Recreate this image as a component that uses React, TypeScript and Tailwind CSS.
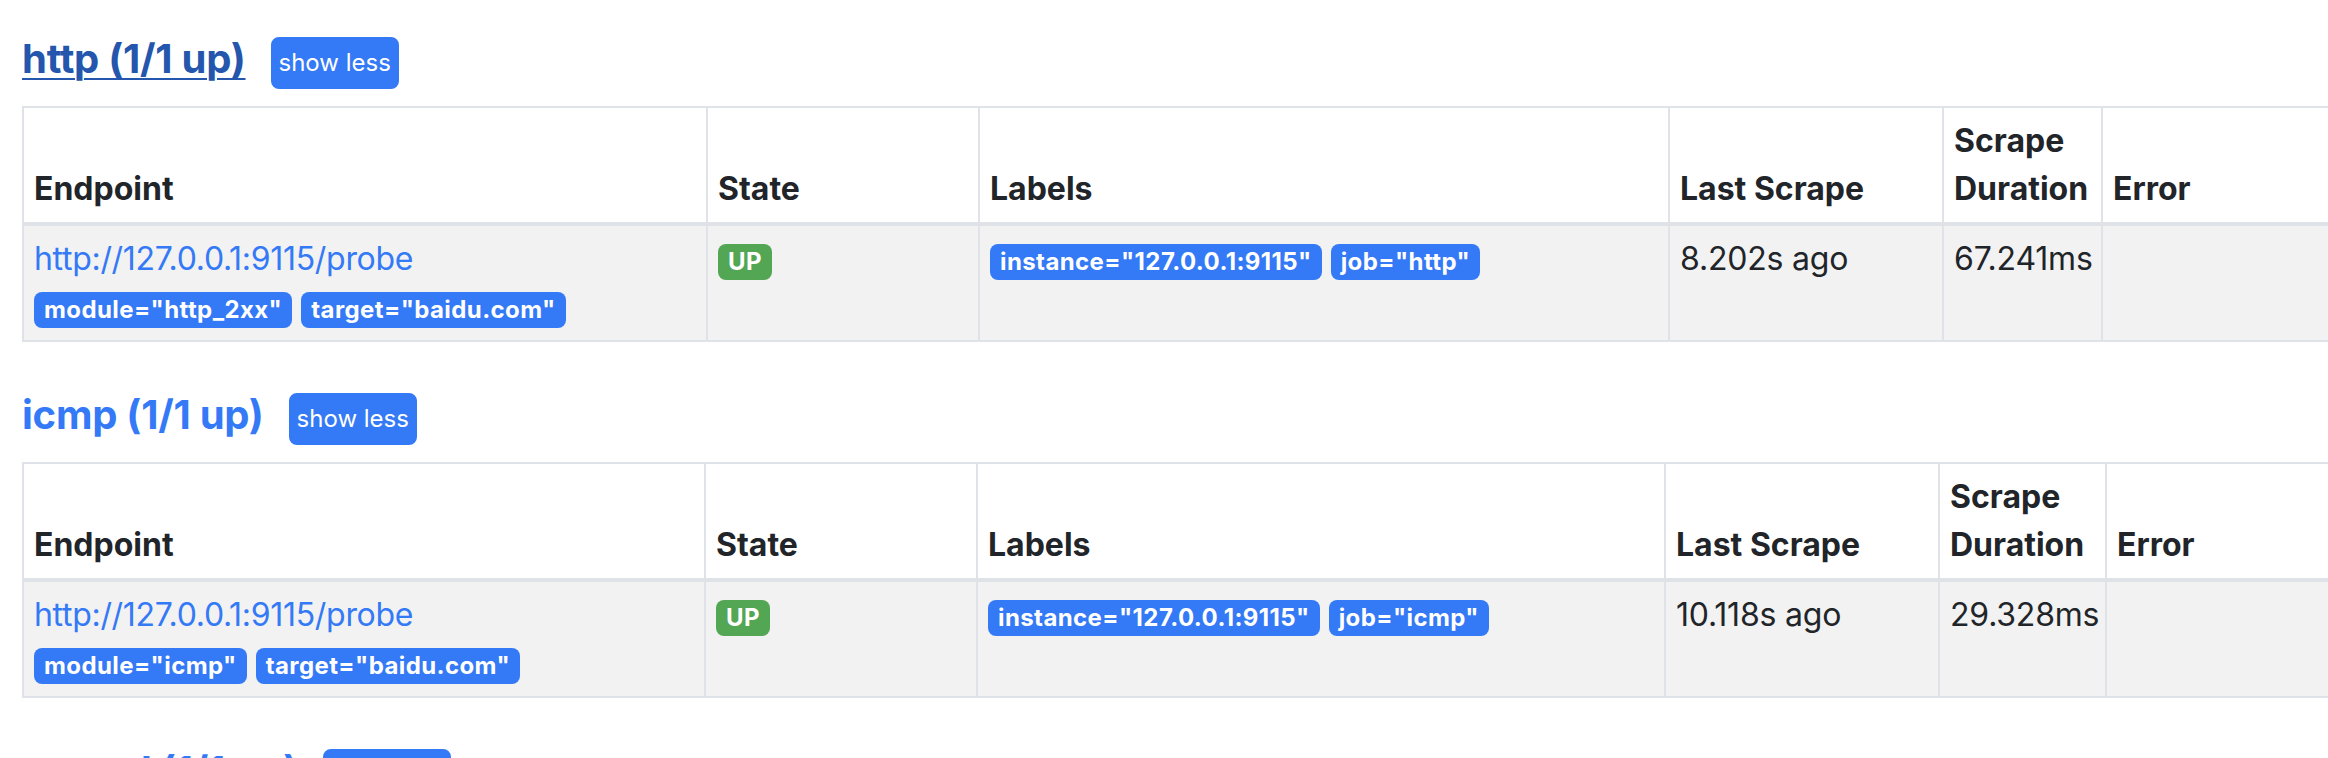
import React from "react";

type Section = {
  name: string;
  hovered: boolean;
  cols: string[];
  endpoint: string;
  epLabels: string[];
  labels: string[];
  last: string;
  dur: string;
};

const sections: Section[] = [
  {
    name: "http",
    hovered: true,
    cols: ["w-[684px]", "w-[272px]", "w-[690px]", "w-[274px]", "w-[159px]", "w-[400px]"],
    endpoint: "http://127.0.0.1:9115/probe",
    epLabels: ['module="http_2xx"', 'target="baidu.com"'],
    labels: ['instance="127.0.0.1:9115"', 'job="http"'],
    last: "8.202s ago",
    dur: "67.241ms",
  },
  {
    name: "icmp",
    hovered: false,
    cols: ["w-[682px]", "w-[272px]", "w-[688px]", "w-[274px]", "w-[167px]", "w-[400px]"],
    endpoint: "http://127.0.0.1:9115/probe",
    epLabels: ['module="icmp"', 'target="baidu.com"'],
    labels: ['instance="127.0.0.1:9115"', 'job="icmp"'],
    last: "10.118s ago",
    dur: "29.328ms",
  },
  {
    name: "consul",
    hovered: false,
    cols: ["w-[682px]", "w-[272px]", "w-[688px]", "w-[274px]", "w-[167px]", "w-[400px]"],
    endpoint: "http://127.0.0.1:9107/metrics",
    epLabels: [],
    labels: ['instance="127.0.0.1:9107"', 'job="consul"'],
    last: "3.512s ago",
    dur: "12.004ms",
  },
];

function Badge({ text, green }: { text: string; green?: boolean }) {
  return (
    <span
      className={
        green
          ? "inline-block rounded-[8px] bg-[#53a653] px-[10px] py-[6px] text-[24px] font-bold leading-none tracking-[0.4px] text-white mr-[9px]"
          : "inline-block rounded-[8px] bg-[#3479f6] px-[10px] py-[6px] text-[24px] font-bold leading-none tracking-[0.4px] text-white mr-[9px]"
      }
    >
      {text}
    </span>
  );
}

const th =
  "border-2 border-b-4 border-[#dfe2e6] px-[10px] py-[9px] text-left align-bottom text-[32px] leading-[48px] font-bold text-[#212529]";
const td =
  "border-2 border-[#dfe2e6] px-[10px] py-[9px] text-left align-top text-[32px] leading-[48px] font-normal tracking-[-0.2px] text-[#212529]";

function Panel({ s }: { s: Section }) {
  return (
    <div className="mb-[48px]">
      <div className="flex items-start">
        <a
          href="#"
          className={
            s.hovered
              ? "mt-[1px] text-[40px] leading-[48px] font-bold tracking-[-0.25px] text-[#2356ac] underline decoration-2 underline-offset-[5px]"
              : "mt-[1px] text-[40px] leading-[48px] font-bold tracking-[-0.25px] text-[#3479f6] no-underline"
          }
        >
          {s.name} (1/1 up)
        </a>
        <button className="ml-[25px] mt-[3px] rounded-[8px] border-2 border-[#3479f6] bg-[#3479f6] px-[6px] py-[6px] text-[24px] leading-[36px] text-white">
          show less
        </button>
      </div>
      <table className="mt-[17px] w-[2450px] table-fixed border-collapse border-2 border-[#dfe2e6]">
        <colgroup>
          {s.cols.map((c, i) => (
            <col key={i} className={c} />
          ))}
        </colgroup>
        <thead>
          <tr className="bg-white">
            <th className={th}>Endpoint</th>
            <th className={th}>State</th>
            <th className={th}>Labels</th>
            <th className={th}>Last Scrape</th>
            <th className={th}>Scrape Duration</th>
            <th className={th}>Error</th>
          </tr>
        </thead>
        <tbody>
          <tr className="bg-[#f2f2f2]">
            <td className={td}>
              <a href="#" className="block tracking-[-0.3px] text-[#3479f6]">
                {s.endpoint}
              </a>
              <div className="flex h-[48px] items-start pt-[9px]">
                {s.epLabels.map((l) => (
                  <Badge key={l} text={l} />
                ))}
              </div>
            </td>
            <td className={td}>
              <div className="flex h-[48px] items-start pt-[9px]">
                <Badge text="UP" green />
              </div>
            </td>
            <td className={td}>
              <div className="flex h-[48px] items-start pt-[9px]">
                {s.labels.map((l) => (
                  <Badge key={l} text={l} />
                ))}
              </div>
            </td>
            <td className={td}>{s.last}</td>
            <td className={td}>{s.dur}</td>
            <td className={td}></td>
          </tr>
        </tbody>
      </table>
    </div>
  );
}

export default function App() {
  return (
    <div className="h-[758px] w-full overflow-hidden bg-white font-['Inter',_'Liberation_Sans',_sans-serif] text-[#212529]">
      <div className="pl-[22px] pt-[34px]">
        {sections.map((s) => (
          <Panel key={s.name} s={s} />
        ))}
      </div>
    </div>
  );
}
